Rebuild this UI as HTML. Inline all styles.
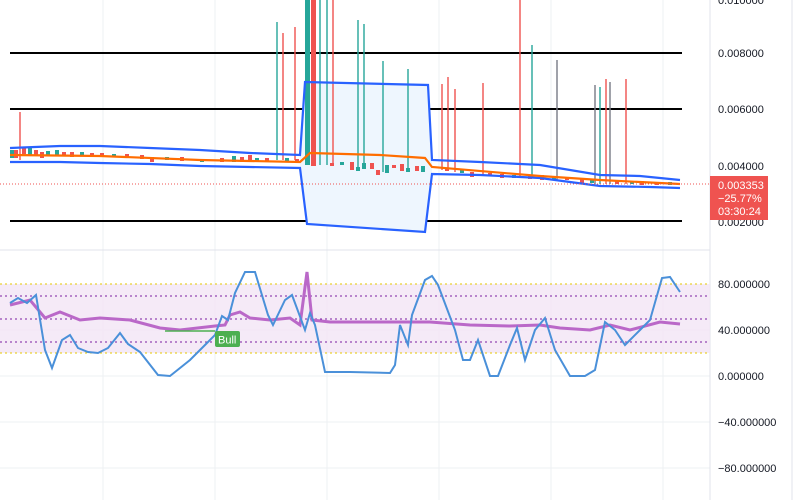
<!DOCTYPE html>
<html><head><meta charset="utf-8"><style>
body{margin:0;width:802px;height:500px;overflow:hidden;background:#fff;font-family:"Liberation Sans",sans-serif}
svg{display:block}
</style></head><body>
<svg width="802" height="500" viewBox="0 0 802 500" xmlns="http://www.w3.org/2000/svg">
<g stroke="#eef0f3" stroke-width="1">
<line x1="103" y1="0" x2="103" y2="500"/><line x1="215" y1="0" x2="215" y2="500"/><line x1="327" y1="0" x2="327" y2="500"/><line x1="439" y1="0" x2="439" y2="500"/><line x1="551" y1="0" x2="551" y2="500"/><line x1="663" y1="0" x2="663" y2="500"/>
<line x1="0" y1="330" x2="710" y2="330"/><line x1="0" y1="376" x2="710" y2="376"/><line x1="0" y1="422" x2="710" y2="422"/><line x1="0" y1="468" x2="710" y2="468"/>
<line x1="0" y1="250" x2="710" y2="250" stroke="#e0e3eb"/>
<line x1="710" y1="0" x2="710" y2="500" stroke="#e0e3eb"/>
<line x1="792" y1="0" x2="792" y2="500" stroke="#e0e3eb"/>
</g>
<g stroke="#000" stroke-width="2"><line x1="10" y1="53" x2="682" y2="53"/><line x1="10" y1="109" x2="682" y2="109"/><line x1="10" y1="221" x2="682" y2="221"/></g>
<polygon points="300,155 305,82 428,85 432,160 432,174 425,232 307,224 300,168" fill="#eef6fe"/>
<g stroke-width="1.4">
<line x1="20" y1="112" x2="20" y2="160" stroke="#ef5350"/>
<line x1="277" y1="22" x2="277" y2="160" stroke="#26a69a"/><line x1="283" y1="33" x2="283" y2="160" stroke="#ef5350"/><line x1="295" y1="27" x2="295" y2="160" stroke="#ef5350"/>
<line x1="320" y1="0" x2="320" y2="165" stroke="#26a69a"/><line x1="327" y1="0" x2="327" y2="165" stroke="#26a69a"/><line x1="333" y1="0" x2="333" y2="165" stroke="#ef5350"/>
<line x1="358" y1="20" x2="358" y2="168" stroke="#26a69a"/><line x1="364" y1="24" x2="364" y2="168" stroke="#26a69a"/><line x1="383" y1="61" x2="383" y2="172" stroke="#26a69a"/><line x1="408" y1="69" x2="408" y2="172" stroke="#26a69a"/>
<line x1="442" y1="84" x2="442" y2="170" stroke="#ef5350"/><line x1="448" y1="77" x2="448" y2="170" stroke="#ef5350"/><line x1="455" y1="89" x2="455" y2="172" stroke="#ef5350"/><line x1="483" y1="83" x2="483" y2="175" stroke="#ef5350"/>
<line x1="520" y1="0" x2="520" y2="178" stroke="#ef5350"/><line x1="532" y1="45" x2="532" y2="178" stroke="#26a69a"/><line x1="557" y1="60" x2="557" y2="180" stroke="#787b86"/>
<line x1="595" y1="85" x2="595" y2="184" stroke="#787b86"/><line x1="600" y1="87" x2="600" y2="184" stroke="#26a69a"/><line x1="606" y1="79" x2="606" y2="184" stroke="#ef5350"/><line x1="610" y1="82" x2="610" y2="184" stroke="#787b86"/><line x1="626" y1="79" x2="626" y2="184" stroke="#ef5350"/>
</g>
<rect x="305" y="0" width="5" height="165" fill="#26a69a"/><rect x="311" y="0" width="5" height="166" fill="#ef5350"/>
<g fill="#ef5350">
<rect x="10" y="150" width="4" height="8" fill="#26a69a"/><rect x="14" y="150" width="4" height="8"/><rect x="22" y="148" width="4" height="6"/><rect x="28" y="148" width="4" height="8" fill="#26a69a"/><rect x="34" y="150" width="4" height="5"/><rect x="40" y="152" width="4" height="6"/><rect x="46" y="151" width="4" height="4" fill="#26a69a"/><rect x="55" y="150" width="4" height="6" fill="#26a69a"/><rect x="62" y="152" width="4" height="4"/><rect x="70" y="152" width="4" height="5"/><rect x="80" y="152" width="4" height="4" fill="#26a69a"/><rect x="90" y="153" width="4" height="4"/><rect x="100" y="153" width="4" height="4"/><rect x="112" y="154" width="4" height="3" fill="#26a69a"/><rect x="125" y="154" width="4" height="4"/><rect x="140" y="155" width="4" height="4"/><rect x="150" y="157" width="4" height="5"/><rect x="165" y="157" width="4" height="3" fill="#26a69a"/><rect x="180" y="157" width="4" height="4"/><rect x="200" y="159" width="4" height="3" fill="#26a69a"/><rect x="220" y="158" width="4" height="4"/><rect x="232" y="156" width="4" height="6" fill="#26a69a"/><rect x="240" y="157" width="4" height="5"/><rect x="248" y="155" width="4" height="6"/><rect x="255" y="158" width="4" height="4" fill="#26a69a"/><rect x="265" y="158" width="4" height="4"/><rect x="285" y="158" width="4" height="3" fill="#26a69a"/><rect x="295" y="159" width="4" height="4"/>
<rect x="330" y="163" width="4" height="3"/><rect x="340" y="162" width="4" height="3" fill="#26a69a"/><rect x="350" y="162" width="4" height="8"/><rect x="356" y="167" width="4" height="4" fill="#26a69a"/><rect x="362" y="163" width="4" height="6" fill="#26a69a"/><rect x="370" y="163" width="4" height="6"/><rect x="376" y="170" width="4" height="5"/><rect x="385" y="165" width="4" height="8" fill="#26a69a"/><rect x="392" y="165" width="4" height="3"/><rect x="400" y="164" width="4" height="7"/><rect x="406" y="168" width="4" height="4" fill="#26a69a"/><rect x="415" y="166" width="4" height="5"/><rect x="421" y="166" width="4" height="6" fill="#26a69a"/>
<rect x="445" y="168" width="4" height="3"/><rect x="460" y="170" width="4" height="3" fill="#26a69a"/><rect x="470" y="172" width="4" height="5"/><rect x="488" y="173" width="4" height="3"/><rect x="500" y="174" width="4" height="4"/><rect x="512" y="175" width="4" height="3" fill="#26a69a"/><rect x="528" y="175" width="4" height="4"/><rect x="540" y="175" width="4" height="5"/><rect x="552" y="177" width="4" height="3" fill="#26a69a"/><rect x="565" y="177" width="4" height="3"/><rect x="580" y="178" width="4" height="5"/><rect x="590" y="180" width="4" height="3" fill="#26a69a"/><rect x="615" y="181" width="4" height="3"/><rect x="630" y="181" width="4" height="3" fill="#26a69a"/><rect x="640" y="181" width="4" height="4"/><rect x="655" y="182" width="4" height="3"/><rect x="668" y="182" width="4" height="3" fill="#26a69a"/>
</g>
<polyline points="10,148 60,146 100,146 150,148 200,150 250,153 300,155 305,82 428,85 432,160 480,162 540,165 570,170 600,175 640,176 680,180" fill="none" stroke="#2962ff" stroke-width="2.2"/>
<polyline points="10,162 60,162 100,163 150,164 200,166 250,167 300,168 307,224 425,232 432,174 480,175 540,178 570,182 600,186 650,187 680,188" fill="none" stroke="#2962ff" stroke-width="2.2"/>
<polyline points="10,155 100,156 200,160 300,162 310,153 380,155 425,158 432,167 540,176 600,180 680,184" fill="none" stroke="#ff6d00" stroke-width="2.2"/>
<line x1="0" y1="184" x2="710" y2="184" stroke="#ef5350" stroke-dasharray="1,2"/>
<rect x="0" y="284" width="710" height="69" fill="#f3e5f5" opacity="0.8"/>
<g stroke-dasharray="2,3" stroke-width="1">
<line x1="0" y1="284" x2="710" y2="284" stroke="#e6c800"/><line x1="0" y1="353" x2="710" y2="353" stroke="#e6c800"/>
<line x1="0" y1="296" x2="710" y2="296" stroke="#7b1fa2"/><line x1="0" y1="319" x2="710" y2="319" stroke="#7b1fa2"/><line x1="0" y1="342" x2="710" y2="342" stroke="#7b1fa2"/>
</g>
<polyline points="10,305 30,300 45,318 60,312 80,320 100,318 130,320 160,328 180,330 215,326 225,325 230,315 240,312 250,318 270,320 290,318 300,325 307,272 312,320 330,322 400,322 430,322 470,325 510,326 540,325 560,328 590,330 610,325 630,330 660,322 680,324" fill="none" stroke="#ba68c8" stroke-width="3"/>
<line x1="165" y1="331" x2="215" y2="331" stroke="#4caf50" stroke-width="1.5"/>
<polyline points="10,303 18,298 27,303 36,295 45,350 52,368 62,340 70,335 78,348 88,352 98,353 108,348 120,333 128,344 140,352 158,375 170,376 190,360 205,345 215,335 222,316 228,320 235,293 245,272 255,272 268,315 273,325 285,300 292,295 305,330 310,313 315,325 325,372 350,372 390,373 395,365 400,325 408,345 412,315 425,280 432,276 438,285 455,330 463,360 470,360 478,340 490,376 498,376 510,345 517,328 525,360 535,330 545,318 555,350 570,376 585,376 595,370 605,322 615,330 625,345 640,330 650,320 662,278 670,277 680,292" fill="none" stroke="#4a90d9" stroke-width="2"/>
<rect x="215" y="331" width="25" height="16" rx="2" fill="#4caf50"/>
<text x="218" y="343.5" font-size="11" fill="#fff">Bull</text>
<g font-size="11" fill="#131722">
<text x="718" y="4">0.010000</text><text x="718" y="57">0.008000</text><text x="718" y="113">0.006000</text><text x="718" y="170">0.004000</text><text x="718" y="226">0.002000</text>
<text x="718" y="288">80.000000</text><text x="718" y="334">40.000000</text><text x="718" y="380">0.000000</text><text x="718" y="426">−40.000000</text><text x="718" y="472">−80.000000</text>
</g>
<rect x="710" y="176" width="58" height="44" fill="#ef5350"/>
<g font-size="11" fill="#fff"><text x="718" y="189">0.003353</text><text x="718" y="202">−25.77%</text><text x="718" y="215">03:30:24</text></g>
</svg>
</body></html>
